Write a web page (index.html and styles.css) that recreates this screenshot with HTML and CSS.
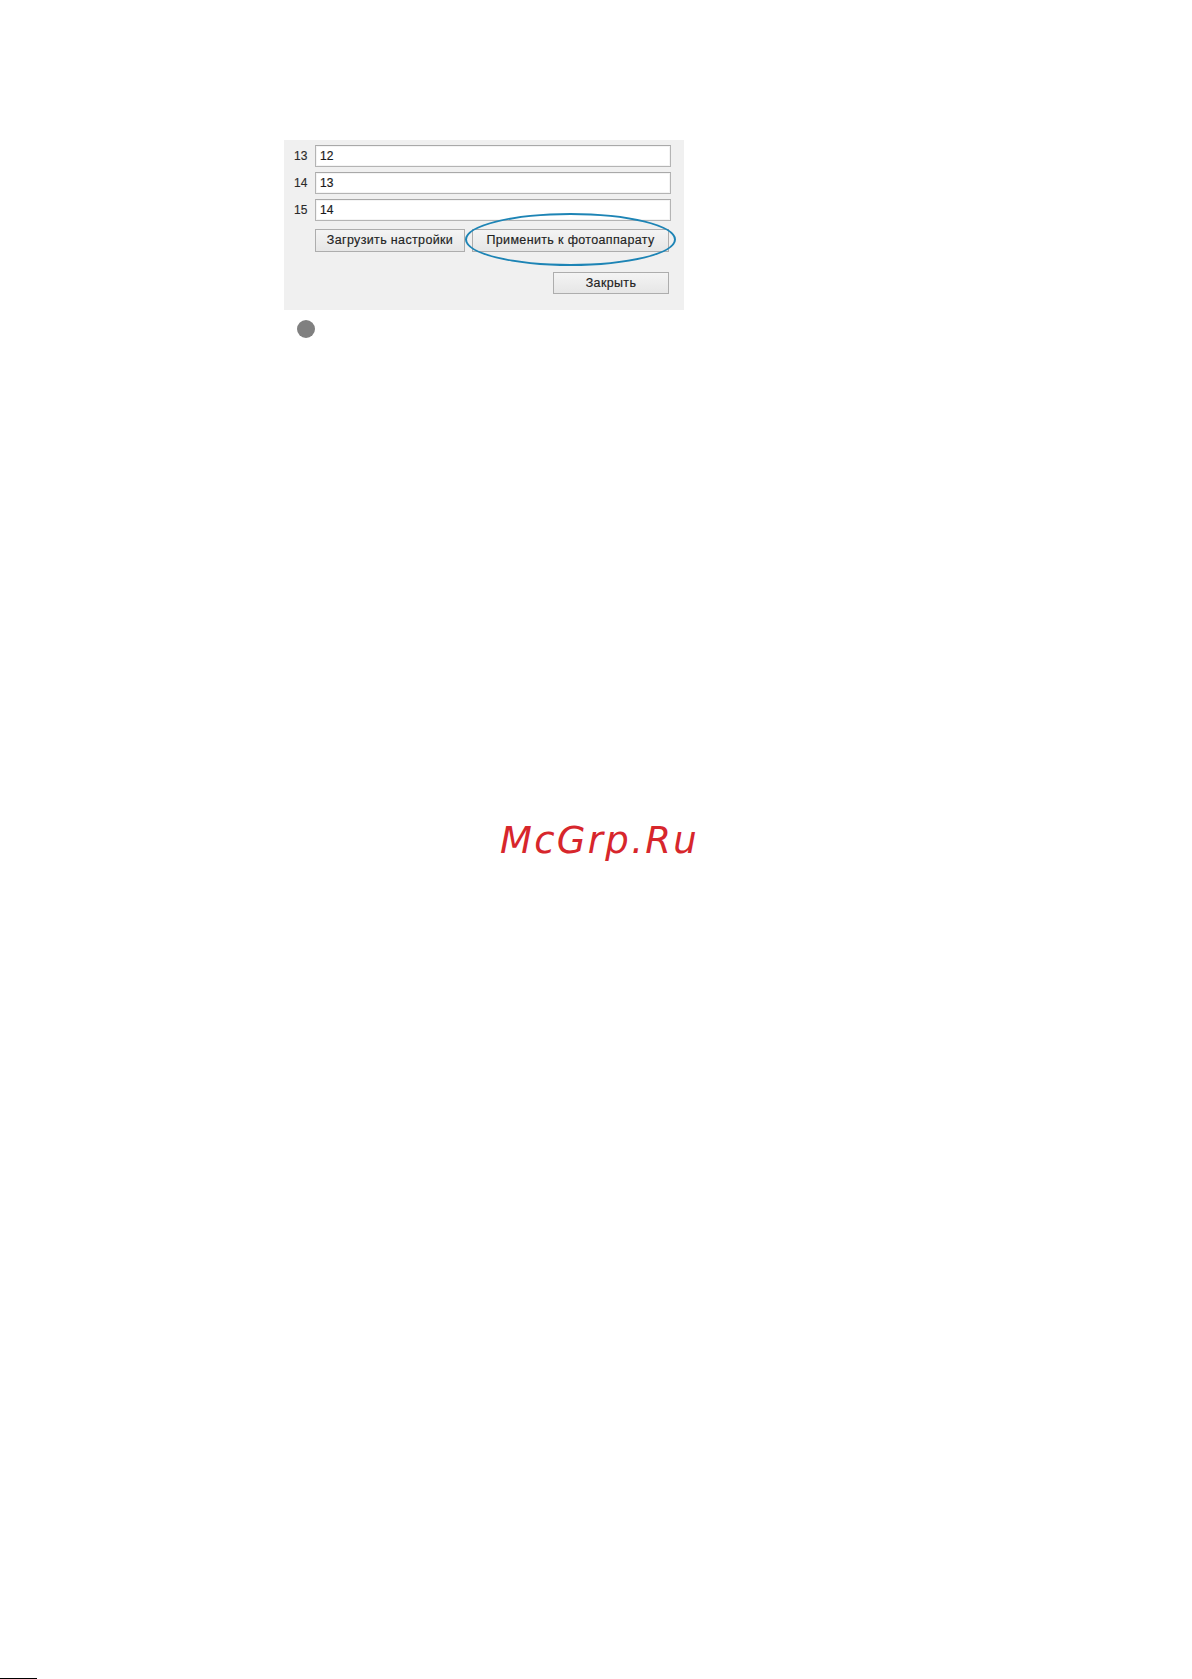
FILE: index.html
```html
<!DOCTYPE html>
<html lang="ru">
<head>
<meta charset="utf-8">
<title>Настройки</title>
<link rel="stylesheet" href="styles.css">
</head>
<body>
<div class="page">
  <div class="panel">
    <div class="row"><span class="num">13</span><div class="field">12</div></div>
    <div class="row"><span class="num">14</span><div class="field">13</div></div>
    <div class="row"><span class="num">15</span><div class="field">14</div></div>
    <div class="actions">
      <div class="btn btn-load">Загрузить настройки</div>
      <div class="btn btn-apply">Применить к фотоаппарату</div>
      <div class="ring"></div>
    </div>
    <div class="close-row">
      <div class="btn btn-close">Закрыть</div>
    </div>
  </div>
  <div class="bullet"></div>
  <div class="watermark">McGrp.Ru</div>
  <div class="footer-line"></div>
</div>
</body>
</html>
```

FILE: styles.css
```css
html, body {
  margin: 0;
  padding: 0;
  background: #ffffff;
}

.page {
  min-height: 1679px;
  box-sizing: border-box;
  padding-top: 140px;
  display: flex;
  flex-direction: column;
  font-family: "Liberation Sans", Arial, sans-serif;
}

.panel {
  margin-left: 284px;
  width: 400px;
  height: 170px;
  box-sizing: border-box;
  background: #f0f0f0;
  padding: 5px 13px 0 0;
  display: flex;
  flex-direction: column;
}

.row {
  display: flex;
  align-items: center;
  height: 22px;
  margin-bottom: 5px;
}

.num {
  width: 31px;
  box-sizing: border-box;
  padding-left: 10px;
  font-size: 12px;
  color: #2a2a2a;
  -webkit-text-stroke: 0.15px #2a2a2a;
}

.field {
  flex: 1;
  height: 22px;
  box-sizing: border-box;
  border: 1px solid #b4b4b4;
  border-top-color: #a9a9a9;
  background: #ffffff;
  box-shadow: inset 0 0 0 1px #f4f4f4;
  padding: 0 0 0 4px;
  font-size: 12px;
  line-height: 20px;
  color: #1a1a1a;
  -webkit-text-stroke: 0.2px #1a1a1a;
}

.actions {
  position: relative;
  display: flex;
  gap: 7px;
  margin-top: 3px;
  padding-left: 31px;
}

.btn {
  height: 23px;
  box-sizing: border-box;
  border: 1px solid #adadad;
  background: linear-gradient(#f4f4f4, #e6e6e6);
  font-size: 12.5px;
  line-height: 21px;
  text-align: center;
  color: #222222;
  letter-spacing: 0.35px;
  -webkit-text-stroke: 0.15px #222222;
}

.btn-load {
  width: 150px;
}

.btn-apply {
  width: 197px;
}

.ring {
  position: absolute;
  left: 181px;
  top: -16px;
  width: 211px;
  height: 53px;
  box-sizing: border-box;
  border: 2px solid #1d84b5;
  border-radius: 50%;
}

.close-row {
  display: flex;
  justify-content: flex-end;
  margin-top: 20px;
  padding-right: 2px;
}

.btn-close {
  width: 116px;
  height: 22px;
  line-height: 20px;
}

.bullet {
  margin-top: 10px;
  margin-left: 297px;
  width: 18px;
  height: 18px;
  border-radius: 50%;
  background: #808080;
}

.watermark {
  margin-top: 484px;
  padding-left: 500px;
  font-family: "DejaVu Sans", sans-serif;
  font-style: italic;
  font-size: 37px;
  line-height: 37px;
  letter-spacing: 2.3px;
  color: #d7262c;
}

.footer-line {
  margin-top: auto;
  width: 37px;
  height: 1px;
  background: #000000;
}
```
